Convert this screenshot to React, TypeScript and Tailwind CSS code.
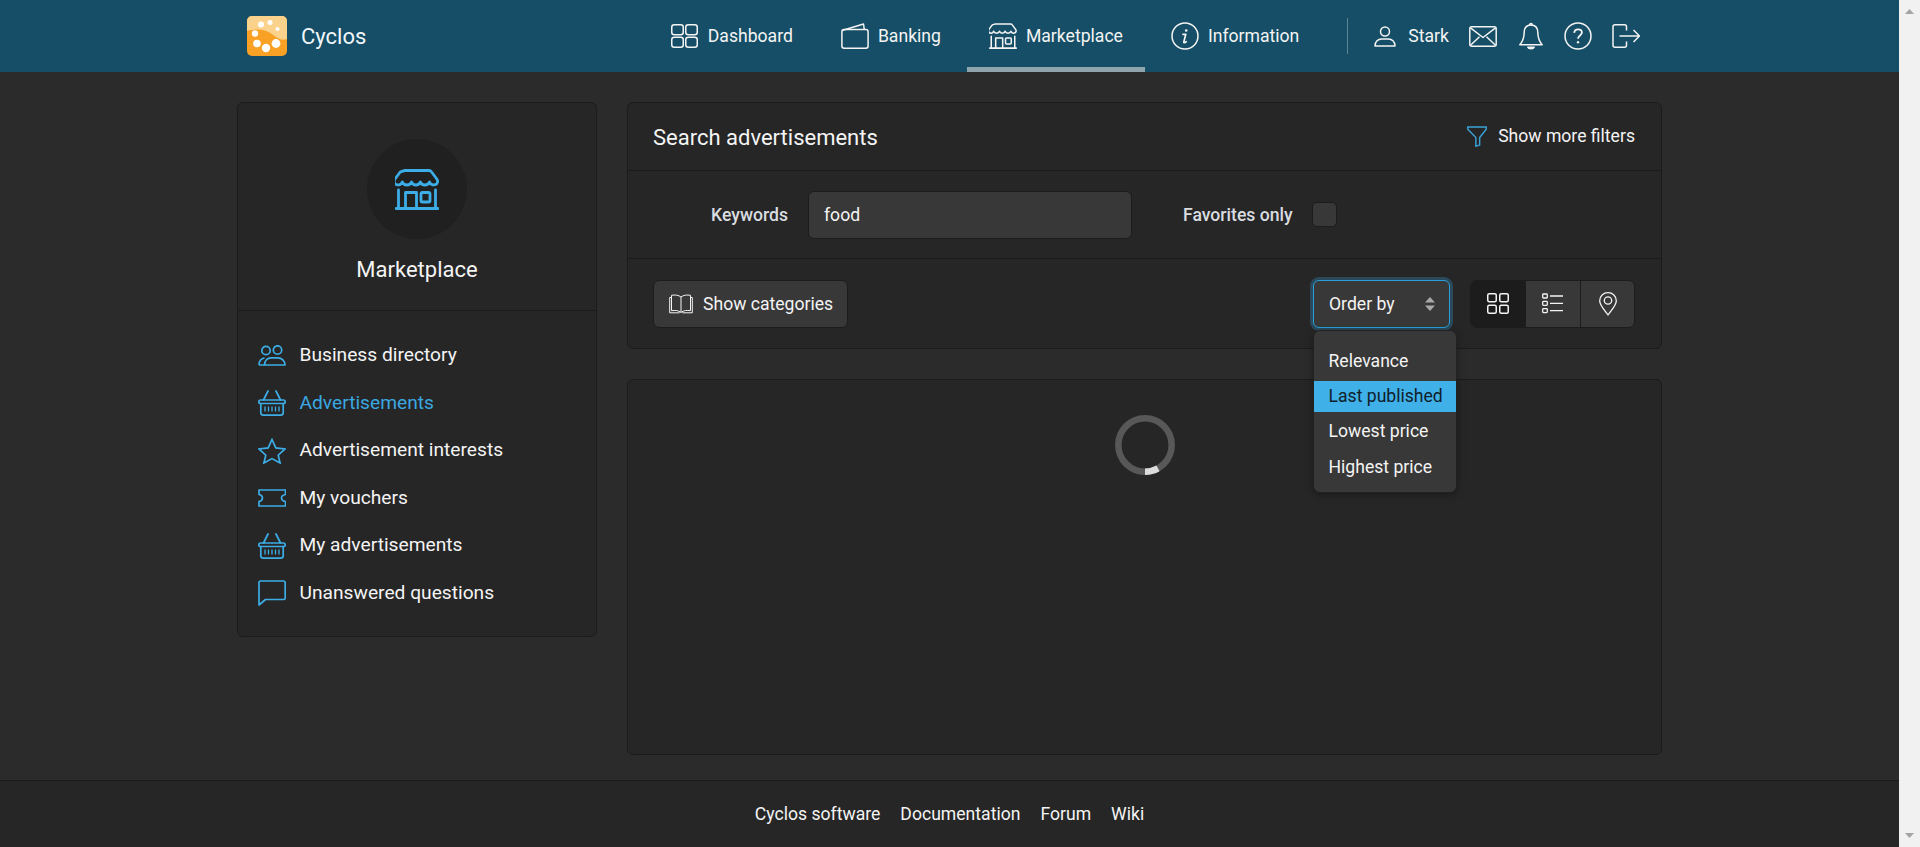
import React from "react";

type IconProps = { className?: string };

const DashboardIcon = ({ className = "" }: IconProps) => (
  <svg viewBox="0 0 27 24" width="27" height="24" fill="none" stroke="currentColor" strokeWidth="1.5" className={className}>
    <rect x="0.75" y="0.75" width="11.5" height="10" rx="2.5" />
    <rect x="14.75" y="0.75" width="11.5" height="10" rx="2.5" />
    <rect x="0.75" y="13.25" width="11.5" height="10" rx="2.5" />
    <rect x="14.75" y="13.25" width="11.5" height="10" rx="2.5" />
  </svg>
);

const GridIcon = () => (
  <svg viewBox="0 0 22 21" width="22" height="21" fill="none" stroke="currentColor" strokeWidth="1.5">
    <rect x="0.75" y="0.75" width="8.5" height="8" rx="1.5" />
    <rect x="12.75" y="0.75" width="8.5" height="8" rx="1.5" />
    <rect x="0.75" y="12.25" width="8.5" height="8" rx="1.5" />
    <rect x="12.75" y="12.25" width="8.5" height="8" rx="1.5" />
  </svg>
);

const WalletIcon = ({ className = "" }: IconProps) => (
  <svg viewBox="0 0 28 26" width="28" height="26" fill="none" stroke="currentColor" strokeWidth="1.5" strokeLinejoin="round" className={className}>
    <path d="M1 7.5 22.5 1l.8 5.5" />
    <rect x="0.9" y="6.6" width="26.2" height="18.6" rx="2.2" />
  </svg>
);

const StoreIcon = ({ className = "", size = 28, stroke = 2.4 }: IconProps & { size?: number; stroke?: number }) => (
  <svg viewBox="0 0 44 41" width={size} height={(size * 41) / 44} fill="none" stroke="currentColor" strokeWidth={stroke} strokeLinejoin="round" strokeLinecap="round" className={className}>
    <path d="M10 1.500h24c1.200 0 2 .6 2.600 1.500l5.200 7c1.400 1.900 1 5-1.600 5.700-2.600.7-5-.5-5.700-2.700-.9 2.200-2.800 3-4.600 3s-3.800-.9-4.600-3c-.8 2.100-2.600 3-4.400 3s-3.600-.9-4.400-3c-.8 2.100-2.800 3-4.600 3s-3.700-.8-4.600-3c-.7 2.200-3.100 3.400-5.700 2.700-2.600-.7-3-3.800-1.600-5.700l5.200-7C8 2.100 8.800 1.500 10 1.500Z" />
    <path d="M3.500 21v18.500M40.500 21v18.500M1 39.500h42" />
    <path d="M10.500 39.500V23.500h11v16" />
    <rect x="26" y="23.500" width="9" height="9.500" rx="1.500" />
  </svg>
);

const InfoIcon = ({ className = "" }: IconProps) => (
  <svg viewBox="0 0 28 28" width="28" height="28" fill="none" stroke="currentColor" strokeWidth="1.5" className={className}>
    <circle cx="14" cy="14" r="13" />
    <path d="M12 12.300h2.800l-2 7.600c-.2.800.5 1 1.100.7l1.300-.9" strokeWidth="1.700" strokeLinecap="round" strokeLinejoin="round" />
    <circle cx="15.200" cy="8.500" r="1.300" fill="currentColor" stroke="none" />
  </svg>
);

const UserIcon = ({ className = "" }: IconProps) => (
  <svg viewBox="0 0 22 21" width="22" height="21" fill="none" stroke="currentColor" strokeWidth="1.5" strokeLinejoin="round" className={className}>
    <circle cx="11" cy="5.500" r="4.500" />
    <path d="M1 19.900c0-4.400 3.200-6.900 6.500-6.900h7c3.300 0 6.500 2.500 6.500 6.900Z" />
  </svg>
);

const MailIcon = ({ className = "" }: IconProps) => (
  <svg viewBox="0 0 28 21" width="28" height="21" fill="none" stroke="currentColor" strokeWidth="1.5" strokeLinejoin="round" className={className}>
    <rect x="0.800" y="0.800" width="26.400" height="19.400" rx="2" />
    <path d="M1.500 1.800 14 11.500 26.500 1.800M1.500 19.300l9-8.500M26.500 19.300l-9-8.500" />
  </svg>
);

const BellIcon = ({ className = "" }: IconProps) => (
  <svg viewBox="0 0 24 28" width="24" height="28" fill="none" stroke="currentColor" strokeWidth="1.5" strokeLinejoin="round" className={className}>
    <path d="M12 3c-4.500 0-6.700 3.400-6.800 7.500-.1 5-1.200 8.700-4.400 12.200h22.400c-3.200-3.500-4.300-7.200-4.400-12.200C18.700 6.400 16.500 3 12 3Z" />
    <path d="M10.800 2.900c0-1.800 2.400-1.800 2.400 0" />
    <path d="M8.800 25.200h6.400c-.9 2.100-5.500 2.100-6.400 0Z" fill="currentColor" />
  </svg>
);

const HelpIcon = ({ className = "" }: IconProps) => (
  <svg viewBox="0 0 28 28" width="28" height="28" fill="none" stroke="currentColor" strokeWidth="1.5" className={className}>
    <circle cx="14" cy="14" r="13" />
    <path d="M10.200 10.800c.2-2.300 1.800-3.500 3.900-3.500 2.200 0 3.800 1.300 3.800 3.200 0 3-3.900 2.900-3.900 6.300" strokeWidth="1.800" />
    <circle cx="14" cy="20.300" r="1.200" fill="currentColor" stroke="none" />
  </svg>
);

const LogoutIcon = ({ className = "" }: IconProps) => (
  <svg viewBox="0 0 28 24" width="28" height="24" fill="none" stroke="currentColor" strokeWidth="1.5" strokeLinejoin="round" className={className}>
    <path d="M14.500 6.500V2.800c0-1.200-.8-2-2-2H3c-1.200 0-2 .8-2 2v18.400c0 1.200.8 2 2 2h9.500c1.200 0 2-.8 2-2v-3.700" />
    <path d="M7.500 12h19.500M21.500 6l6 6-6 6" />
  </svg>
);

const UsersIcon = ({ className = "" }: IconProps) => (
  <svg viewBox="0 0 28 21" width="28" height="21" fill="none" stroke="currentColor" strokeWidth="1.700" strokeLinejoin="round" className={className}>
    <circle cx="8" cy="5.500" r="4.200" />
    <circle cx="19.500" cy="5" r="4.200" />
    <path d="M1 20c0-3.800 2.200-6.300 5.500-7.200M6.500 20H1" />
    <path d="M6.500 20c0-4.300 3-7.200 6.500-7.200h7c3.600 0 7 2.900 7 7.200Z" />
  </svg>
);

const BasketIcon = ({ className = "" }: IconProps) => (
  <svg viewBox="0 0 28 26" width="28" height="26" fill="none" stroke="currentColor" strokeWidth="1.700" strokeLinejoin="round" strokeLinecap="round" className={className}>
    <path d="M5.500 10 10 1M22.500 10 18 1" />
    <rect x="0.800" y="10" width="26.400" height="3.500" rx="1.700" />
    <path d="M2.800 13.500v9.300c0 1.400.9 2.300 2.300 2.300h17.800c1.400 0 2.300-.9 2.300-2.300v-9.300" />
    <path d="M7 16.500v5M10.500 16.500v5M14 16.500v5M17.500 16.500v5M21 16.500v5" strokeWidth="1.300" strokeLinecap="butt" />
  </svg>
);

const StarIcon = ({ className = "" }: IconProps) => (
  <svg viewBox="0 0 28 26" width="28" height="26" fill="none" stroke="currentColor" strokeWidth="1.700" strokeLinejoin="miter" className={className}>
    <path d="M14 1.500 17.800 9.900 27 11 20.200 17.200 22.100 25 14 20.600 5.900 25 7.800 17.200 1 11 10.200 9.900Z" />
  </svg>
);

const TicketIcon = ({ className = "" }: IconProps) => (
  <svg viewBox="0 0 28 18" width="28" height="18" fill="none" stroke="currentColor" strokeWidth="1.700" strokeLinejoin="round" className={className}>
    <path d="M1 1h26.500v4.500c-2.800.6-4 1.900-4 3.500s1.200 2.900 4 3.500V17H1v-4.500c2.400-.5 3.500-1.900 3.500-3.500S3.400 6 1 5.500Z" />
  </svg>
);

const ChatIcon = ({ className = "" }: IconProps) => (
  <svg viewBox="0 0 28 26" width="28" height="26" fill="none" stroke="currentColor" strokeWidth="1.700" strokeLinejoin="round" className={className}>
    <path d="M2.500 1h23c1 0 1.700.7 1.700 1.700v15.100c0 1-.7 1.700-1.700 1.700H7.500L1 25V2.700C1 1.700 1.500 1 2.500 1Z" />
  </svg>
);

const FilterIcon = ({ className = "" }: IconProps) => (
  <svg viewBox="0 0 21 22" width="20" height="21" fill="none" stroke="currentColor" strokeWidth="1.500" strokeLinejoin="miter" className={className}>
    <path d="M.800 1h19.400v2.300l-6.900 8.700v8l-4 1.200v-9.200L.800 3.300Z" />
  </svg>
);

const BookIcon = ({ className = "" }: IconProps) => (
  <svg viewBox="0 0 24 20" width="24" height="20" fill="none" stroke="currentColor" strokeWidth="1" strokeLinejoin="round" className={className}>
    <path d="M12 3C9.500 1 6 .7 2.500 1.300v15.400c3.500-.6 7-.3 9.500 1.700 2.500-2 6-2.300 9.500-1.700V1.300C18 .7 14.500 1 12 3ZM12 3v15.400" />
    <path d="M2.500 3.500H.7v15.300h10M21.500 3.500h1.800v15.300h-10" />
  </svg>
);

const ListIcon = ({ className = "" }: IconProps) => (
  <svg viewBox="0 0 22 21" width="22" height="21" fill="none" stroke="currentColor" strokeWidth="1.300" className={className}>
    <rect x="0.700" y="1" width="4.600" height="4" rx="0.800" />
    <rect x="0.700" y="8.300" width="4.600" height="4" rx="0.800" />
    <rect x="0.700" y="15.600" width="4.600" height="4" rx="0.800" />
    <path d="M8 3h13M8 10.300h13M8 17.600h13" />
  </svg>
);

const PinIcon = ({ className = "" }: IconProps) => (
  <svg viewBox="0 0 18 24" width="18" height="24" fill="none" stroke="currentColor" strokeWidth="1.300" strokeLinejoin="round" className={className}>
    <path d="M9 23C4.500 16.500.7 13.200.7 8.700.7 4.100 4.400.7 9 .7s8.300 3.400 8.300 8c0 4.500-3.800 7.800-8.300 14.300Z" />
    <circle cx="9" cy="8.500" r="3.700" />
  </svg>
);

const CyclosLogo = () => (
  <svg viewBox="0 0 40 40" width="40" height="40">
    <rect width="40" height="40" rx="5" fill="#f9a124" />
    <path d="M0 15V5a5 5 0 0 1 5-5h30a5 5 0 0 1 5 5v18c-6 2-10-1-15-5-6-4-13-6-25-3Z" fill="#fbd28c" />
    <g fill="#ffffff">
      <circle cx="14" cy="8.500" r="3" />
      <circle cx="23" cy="6.500" r="2.500" />
      <circle cx="30.500" cy="13" r="2" />
      <circle cx="8" cy="17.500" r="3.200" />
      <circle cx="10" cy="27.500" r="3.800" />
      <circle cx="19" cy="32" r="4.200" />
      <circle cx="29" cy="27.500" r="4.400" />
    </g>
  </svg>
);

const navItems = [
  { label: "Dashboard", icon: <DashboardIcon /> },
  { label: "Banking", icon: <WalletIcon /> },
  { label: "Marketplace", icon: <StoreIcon />, active: true },
  { label: "Information", icon: <InfoIcon /> },
];

const menuItems = [
  { label: "Business directory", icon: <UsersIcon /> },
  { label: "Advertisements", icon: <BasketIcon />, active: true },
  { label: "Advertisement interests", icon: <StarIcon /> },
  { label: "My vouchers", icon: <TicketIcon /> },
  { label: "My advertisements", icon: <BasketIcon /> },
  { label: "Unanswered questions", icon: <ChatIcon /> },
];

const orderOptions = ["Relevance", "Last published", "Lowest price", "Highest price"];

export default function App() {
  return (
    <div className="flex h-[847px] overflow-hidden font-['Roboto',sans-serif] text-[17.6px] text-[#f4f4f4]">
      <div className="flex min-w-0 flex-1 flex-col bg-[#2b2b2b]">
        {/* Header */}
        <header className="h-[72px] shrink-0 bg-[#154e66]">
          <div className="mx-auto flex h-full w-[1425px] items-center pl-[10px] pr-[22px]">
            <CyclosLogo />
            <span className="ml-[14px] text-[22px] text-[#f0f6f9]">Cyclos</span>
            <nav className="ml-auto flex h-full gap-1">
              {navItems.map((item) => (
                <div
                  key={item.label}
                  className={`flex h-full items-center gap-[9px] px-[22px] ${
                    item.active ? "border-b-[5px] border-[#8fa6ae] pt-[5px]" : ""
                  }`}
                >
                  <span className="flex w-[28px] justify-center">{item.icon}</span>
                  <span>{item.label}</span>
                </div>
              ))}
            </nav>
            <div className="mx-[26px] h-[36px] w-px bg-[#5d8596]" />
            <div className="flex items-center">
              <UserIcon />
              <span className="ml-[12px]">Stark</span>
              <MailIcon className="ml-[20px]" />
              <BellIcon className="ml-[22px]" />
              <HelpIcon className="ml-[21px]" />
              <LogoutIcon className="ml-[20px]" />
            </div>
          </div>
        </header>

        {/* Main */}
        <main className="flex-1">
          <div className="mx-auto flex w-[1425px] items-start gap-[30px] pt-[30px]">
            {/* Sidebar */}
            <aside className="w-[360px] shrink-0 rounded-md border border-[#1b1b1b] bg-[#262626]">
              <div className="flex h-[208px] flex-col items-center border-b border-[#1b1b1b] pt-[36px]">
                <div className="flex h-[100px] w-[100px] items-center justify-center rounded-full bg-[#202020] text-[#3cade6]">
                  <StoreIcon size={44} stroke={2.8} />
                </div>
                <div className="mt-[18px] text-[22px] leading-[26px]">Marketplace</div>
              </div>
              <ul className="flex flex-col pb-[19px] pl-[20px] pt-[21px] text-[19.2px]">
                {menuItems.map((item) => (
                  <li key={item.label} className="flex h-[47.5px] items-center gap-[13.5px]">
                    <span className="flex w-[28px] justify-center text-[#3cade6]">{item.icon}</span>
                    <span className={item.active ? "text-[#3aa8e2]" : ""}>{item.label}</span>
                  </li>
                ))}
              </ul>
            </aside>

            {/* Content */}
            <div className="flex w-[1035px] flex-col gap-[30px]">
              <section className="rounded-md border border-[#1b1b1b] bg-[#262626]">
                <div className="flex h-[68px] items-center justify-between border-b border-[#1b1b1b] pl-[25px] pr-[26px]">
                  <h1 className="pt-[2px] text-[22px] font-normal">Search advertisements</h1>
                  <div className="flex items-center gap-[11px]">
                    <FilterIcon className="text-[#3aa2d8]" />
                    <span>Show more filters</span>
                  </div>
                </div>
                <div className="flex h-[88px] items-center border-b border-[#1b1b1b] pl-[25px]">
                  <label className="w-[135px] pt-[2px] text-right font-medium text-[#d9dde0]">Keywords</label>
                  <div className="ml-[20px] flex h-[48px] w-[324px] items-center rounded-md border border-[#1c1c1c] bg-[#383838] pl-[15px] pt-[1px]">
                    food
                  </div>
                  <label className="ml-[51px] pt-[2px] font-medium text-[#d9dde0]">Favorites only</label>
                  <div className="ml-[19px] h-[25px] w-[25px] rounded-[5px] border border-[#1c1c1c] bg-[#383838]" />
                </div>
                <div className="flex h-[89px] items-center pl-[25px]">
                  <button className="flex h-[48px] w-[195px] items-center gap-[10px] rounded-md border border-[#1c1c1c] bg-[#383838] pl-[15px]">
                    <BookIcon />
                    <span className="pt-[1px]">Show categories</span>
                  </button>
                  <div className="relative ml-[465px] h-[48px] w-[137px]">
                    <div className="flex h-full items-center justify-between rounded-md border border-[#2a9fda] bg-[#383838] pl-[15px] pr-[14px] shadow-[0_0_0_3px_#2a4a5c]">
                      <span className="pt-[1px]">Order by</span>
                      <svg viewBox="0 0 10 14" width="10" height="14" fill="#a8a8a8">
                        <path d="M5 0 10 5.500H0ZM5 14 0 8.500H10Z" />
                      </svg>
                    </div>
                    <ul className="absolute left-px top-[51px] z-10 flex w-[142px] flex-col gap-[4.3px] rounded-md bg-[#383838] pb-[10px] pt-[15px] shadow-[0_0_0_1px_#222222,0_2px_8px_rgba(0,0,0,0.4)]">
                      {orderOptions.map((option) => (
                        <li
                          key={option}
                          className={`flex h-[31px] items-center pl-[14.5px] ${
                            option === "Last published" ? "bg-[#3fb0e8] text-[#10202b]" : ""
                          }`}
                        >
                          {option}
                        </li>
                      ))}
                    </ul>
                  </div>
                  <div className="ml-[20px] flex h-[48px] w-[165px] overflow-hidden rounded-md border border-[#1c1c1c] bg-[#383838]">
                    <div className="flex w-[55px] items-center justify-center border-r border-[#1c1c1c] bg-[#1c1c1c]">
                      <GridIcon />
                    </div>
                    <div className="flex w-[55px] items-center justify-center border-r border-[#1c1c1c]">
                      <ListIcon />
                    </div>
                    <div className="flex flex-1 items-center justify-center">
                      <PinIcon />
                    </div>
                  </div>
                </div>
              </section>

              <section className="flex h-[376px] justify-center rounded-md border border-[#1b1b1b] bg-[#262626] pt-[35px]">
                <svg viewBox="0 0 60 60" width="60" height="60" fill="none" strokeWidth="6.500">
                  <circle cx="30" cy="30" r="26.700" stroke="#585858" />
                  <path d="M30 56.700A26.700 26.700 0 0 0 43 53.300" stroke="#dcdcdc" />
                </svg>
              </section>
            </div>
          </div>
        </main>

        {/* Footer */}
        <footer className="flex h-[67px] shrink-0 items-center justify-center gap-[20px] border-t border-[#1b1b1b] bg-[#262626]">
          <span>Cyclos software</span>
          <span>Documentation</span>
          <span>Forum</span>
          <span>Wiki</span>
        </footer>
      </div>

      {/* Browser scrollbar */}
      <div className="flex w-[21px] shrink-0 flex-col items-center justify-between bg-[#f1f1f1] py-[9px]">
        <svg viewBox="0 0 9 5" width="9" height="5" fill="#a3a3a3">
          <path d="M4.500 0 9 5H0Z" />
        </svg>
        <svg viewBox="0 0 9 5" width="9" height="5" fill="#a3a3a3">
          <path d="M4.500 5 0 0h9Z" />
        </svg>
      </div>
    </div>
  );
}
